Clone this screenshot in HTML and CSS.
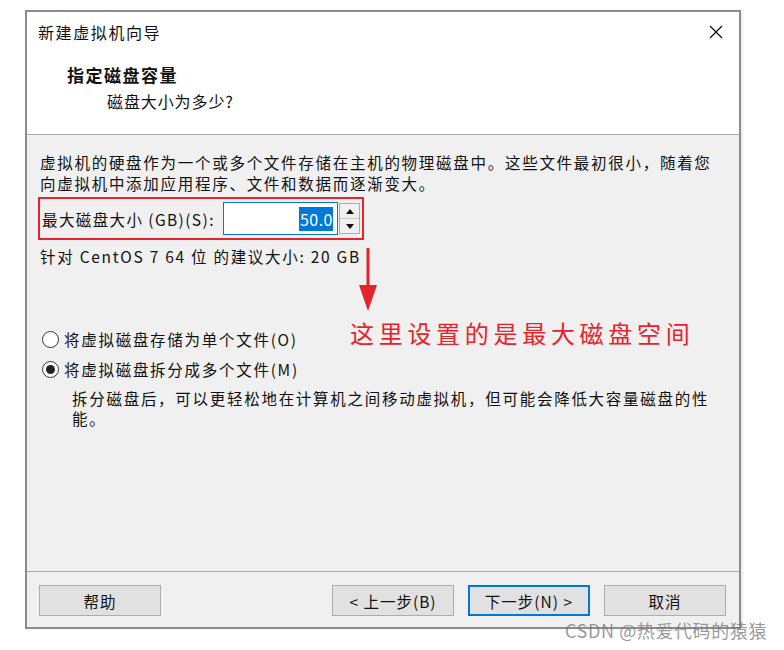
FILE: index.html
```html
<!DOCTYPE html>
<html lang="zh-CN">
<head>
<meta charset="utf-8">
<title>新建虚拟机向导</title>
<link rel="stylesheet" href="styles.css">
</head>
<body>
<div class="dialog">
  <div class="top">
    <div class="titlebar">
      <span class="title">新建虚拟机向导</span>
      <svg class="close" width="14" height="14" viewBox="0 0 14 14"><path d="M1 1L13 13M13 1L1 13" stroke="#111" stroke-width="1.3" fill="none"/></svg>
    </div>
    <div class="header">
      <div class="h-title">指定磁盘容量</div>
      <div class="h-sub">磁盘大小为多少?</div>
    </div>
  </div>
  <div class="body">
    <p class="para">虚拟机的硬盘作为一个或多个文件存储在主机的物理磁盘中。这些文件最初很小，随着您<br>向虚拟机中添加应用程序、文件和数据而逐渐变大。</p>
    <div class="sizebox">
      <span class="label">最大磁盘大小 (GB)(S):</span>
      <div class="input"><span class="sel">50.0</span></div>
      <div class="spin">
        <div class="spin-btn"><svg width="8" height="5" viewBox="0 0 8 5"><path d="M0 5L4 0L8 5Z" fill="#111"/></svg></div>
        <div class="spin-btn"><svg width="8" height="5" viewBox="0 0 8 5"><path d="M0 0L4 5L8 0Z" fill="#111"/></svg></div>
      </div>
    </div>
    <p class="hint">针对 CentOS 7 64 位 的建议大小: 20 GB</p>
    <div class="radios">
      <label class="radio-row"><span class="radio"></span>将虚拟磁盘存储为单个文件(O)</label>
      <label class="radio-row"><span class="radio checked"></span>将虚拟磁盘拆分成多个文件(M)</label>
      <p class="desc">拆分磁盘后，可以更轻松地在计算机之间移动虚拟机，但可能会降低大容量磁盘的性<br>能。</p>
    </div>
  </div>
  <div class="footer">
    <button class="btn">帮助</button>
    <div class="spacer"></div>
    <button class="btn">&lt; 上一步(B)</button>
    <button class="btn primary">下一步(N) &gt;</button>
    <button class="btn">取消</button>
  </div>
</div>
<svg class="arrow" width="20" height="64" viewBox="0 0 20 64"><path d="M8.5 0H11.5V38H8.5Z" fill="#e8222b"/><path d="M1 37H19L10 63Z" fill="#e8222b"/></svg>
<div class="note">这里设置的是最大磁盘空间</div>
<div class="watermark">CSDN @热爱代码的猿猿</div>
</body>
</html>
```

FILE: styles.css
```css
* { box-sizing: border-box; }
html, body { margin: 0; padding: 0; background: #fff; }
body {
  width: 784px;
  height: 650px;
  position: relative;
  overflow: hidden;
  font-family: "Noto Sans CJK SC", "Noto Sans", sans-serif;
  color: #111;
}
.dialog {
  margin: 10px 0 0 25px;
  width: 716px;
  height: 619px;
  border: 2px solid #8c8c8c;
  background: #f0f0f0;
  display: flex;
  flex-direction: column;
  box-shadow: 2px 0 2px rgba(0,0,0,0.08);
}
.top {
  background: #fff;
  border-bottom: 1px solid #a8a8a8;
  height: 123px;
}
.titlebar {
  height: 39px;
  display: flex;
  align-items: center;
  justify-content: space-between;
  padding: 0 16px 0 11px;
}
.title { font-size: 16px; letter-spacing: 1.6px; }
.header { padding: 13px 0 0 40px; }
.h-title { font-size: 17px; font-weight: 700; line-height: 22px; letter-spacing: 1.5px; }
.h-sub { font-size: 16px; line-height: 22px; margin-top: 4px; padding-left: 40px; letter-spacing: 0.9px; }
.body {
  flex: 1;
  padding: 17px 13px 0 13px;
  font-size: 15.5px;
  letter-spacing: 1.72px;
}
.para { margin: 0; line-height: 21px; }
.sizebox {
  margin-top: 3px;
  width: 326px;
  height: 43px;
  border: 2px solid #e8222b;
  margin-left: -2px;
  display: flex;
  align-items: center;
  padding-left: 2px;
}
.label { width: 181px; flex: none; letter-spacing: 1.4px; }
.input {
  width: 115px;
  height: 33px;
  border: 1px solid #0078d7;
  background: #fff;
  display: flex;
  align-items: center;
  justify-content: flex-end;
  padding-right: 4px;
}
.sel {
  background: #0078d7;
  color: #fff;
  font-size: 16px;
  line-height: 24px;
  letter-spacing: 0.5px;
  padding: 0 0 0 1px;
}
.spin {
  margin-left: 1px;
  width: 21px;
  height: 31px;
  display: flex;
  flex-direction: column;
  border: 1px solid #adadad;
  background: #f0f0f0;
}
.spin-btn {
  flex: 1;
  display: flex;
  align-items: center;
  justify-content: center;
  border-bottom: 1px solid #c8c8c8;
}
.spin-btn:last-child { border-bottom: none; }
.hint { margin: 6px 0 0; line-height: 21px; }
.radios { margin-top: 61px; }
.radio-row {
  display: flex;
  align-items: center;
  height: 22px;
  margin-bottom: 8px;
}
.radio {
  width: 17px;
  height: 17px;
  border-radius: 50%;
  border: 1px solid #333;
  background: #fff;
  margin: 0 5px 0 2px;
  flex: none;
  display: flex;
  align-items: center;
  justify-content: center;
}
.radio.checked::after {
  content: "";
  width: 9px;
  height: 9px;
  border-radius: 50%;
  background: #222;
}
.desc { margin: 2px 0 0 32px; line-height: 20px; }
.footer {
  border-top: 1px solid #a8a8a8;
  height: 56px;
  padding: 13px 13px 0 12px;
  display: flex;
  align-items: flex-start;
  gap: 14px;
}
.spacer { flex: 1; }
.btn {
  width: 122px;
  height: 31px;
  background: #e1e1e1;
  border: 1px solid #adadad;
  font-family: "Noto Sans CJK SC", "Noto Sans", sans-serif;
  font-size: 15.5px;
  letter-spacing: 1px;
  color: #111;
  padding: 0;
}
.btn.primary { border: 2px solid #0078d7; }
.arrow { position: absolute; left: 358px; top: 248px; }
.note {
  position: absolute;
  left: 350px;
  top: 316px;
  font-size: 24px;
  line-height: 34px;
  letter-spacing: 4.7px;
  color: #e8222b;
}
.watermark {
  position: absolute;
  left: 565px;
  top: 619px;
  font-size: 18px;
  line-height: 22px;
  letter-spacing: 0.6px;
  color: rgba(120,120,120,0.75);
  font-family: "Noto Sans CJK SC", sans-serif;
}
```
